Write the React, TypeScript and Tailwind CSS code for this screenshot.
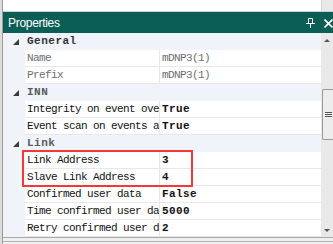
import React from 'react';

type Row =
  | { kind: 'cat'; label: string; dark?: boolean }
  | { kind: 'prop'; name: string; value: string; muted?: boolean };

const rows: Row[] = [
  { kind: 'cat', label: 'General', dark: true },
  { kind: 'prop', name: 'Name', value: 'mDNP3(1)', muted: true },
  { kind: 'prop', name: 'Prefix', value: 'mDNP3(1)', muted: true },
  { kind: 'cat', label: 'INN' },
  { kind: 'prop', name: 'Integrity on event overflow', value: 'True' },
  { kind: 'prop', name: 'Event scan on events available', value: 'True' },
  { kind: 'cat', label: 'Link' },
  { kind: 'prop', name: 'Link Address', value: '3' },
  { kind: 'prop', name: 'Slave Link Address', value: '4' },
  { kind: 'prop', name: 'Confirmed user data', value: 'False' },
  { kind: 'prop', name: 'Time confirmed user data', value: '5000' },
  { kind: 'prop', name: 'Retry confirmed user data', value: '2' },
];

const mono = "font-['Liberation_Mono','DejaVu_Sans_Mono',monospace]";

const Triangle = () => (
  <svg width="6" height="6" viewBox="0 0 6 6" className="block">
    <path d="M6 0 L6 6 L0 6 Z" fill="#3a3a3a" />
  </svg>
);

const PropRow = ({ row }: { row: Row }) => {
  if (row.kind === 'cat') {
    return (
      <div className="flex h-[17px] items-center bg-[#f0f3f9]">
        <div className="flex w-[22px] justify-end pr-[6px]">
          <Triangle />
        </div>
        <span
          className={`${mono} pl-[2px] text-[11px] font-bold tracking-[0.5px] ${
            row.dark ? 'text-[#333]' : 'text-[#555d5d]'
          }`}
        >
          {row.label}
        </span>
      </div>
    );
  }
  return (
    <div className="flex h-[17px]">
      <div className="w-[22px] bg-[#f0f3f9]" />
      <div className="flex w-[135px] items-center overflow-hidden whitespace-nowrap border-b border-r border-[#e8e8e8] pl-[2px]">
        <span
          className={`${mono} text-[11px] tracking-[-0.6px] ${
            row.muted ? 'text-[#6e6e6e]' : 'text-[#111]'
          }`}
        >
          {row.name}
        </span>
      </div>
      <div className="flex flex-1 items-center overflow-hidden whitespace-nowrap border-b border-[#e8e8e8] pl-[2px]">
        {row.muted ? (
          <span className={`${mono} text-[11px] tracking-[-0.6px] text-[#6e6e6e]`}>
            {row.value}
          </span>
        ) : (
          <span className={`${mono} text-[11px] font-bold tracking-[0.4px] text-[#111]`}>
            {row.value}
          </span>
        )}
      </div>
    </div>
  );
};

const ScrollBar = () => (
  <div className="flex w-[12px] flex-col items-center bg-[#e9e9e9]">
    <div className="mt-[6px] h-0 w-0 border-x-[3px] border-b-[3px] border-x-transparent border-b-[#555]" />
    <div className="mt-[47px] flex h-[51px] w-[11px] flex-col items-center justify-center gap-[1px] self-end rounded-l-[2px] border border-r-0 border-[#9a9a9a] bg-[#ededed]">
      <div className="h-[1px] w-[7px] bg-[#555]" />
      <div className="h-[1px] w-[7px] bg-[#555]" />
      <div className="h-[1px] w-[7px] bg-[#555]" />
    </div>
    <div className="flex-1" />
    <div className="mb-[5px] h-0 w-0 border-x-[3px] border-t-[3px] border-x-transparent border-t-[#555]" />
  </div>
);

export default function App() {
  return (
    <div className="flex h-[244px] w-[333px] overflow-hidden bg-white">
      <div className="w-[3px] border-r border-[#9a9a9a] bg-[#dcdcdc]" />
      <div className="flex flex-1 flex-col">
        <div className="flex h-[12px] border-b border-[#d0d0d0] bg-white">
          <div className="flex-1" />
          <div className="w-[12px] border-l border-[#d4d4d4] bg-[#e9e9e9]" />
        </div>
        <div className="flex h-[21px] items-center bg-[#0b5e55] pl-[5px] pr-[0px]">
          <span className="font-['Liberation_Sans','Noto_Sans',sans-serif] text-[12px] tracking-[-0.3px] text-white">
            Properties
          </span>
          <div className="flex-1" />
          <svg width="9" height="10" viewBox="0 0 9 10" className="mr-[9px] mt-[1px]">
            <path d="M2.5 0.5 H6.5 V5.5 H2.5 Z M0 5.5 H9 M4.5 5.5 V10" stroke="white" strokeWidth="1" fill="none" />
          </svg>
          <svg width="9" height="9" viewBox="0 0 9 9" className="mt-[1px]">
            <path d="M0.5 0.5 L8.5 8.5 M8.5 0.5 L0.5 8.5" stroke="white" strokeWidth="1.6" />
          </svg>
        </div>
        <div className="relative flex flex-1">
          <div className="flex flex-1 flex-col">
            {rows.map((r, i) => (
              <PropRow key={i} row={r} />
            ))}
          </div>
          <ScrollBar />
          <div className="absolute left-[19px] top-[117px] h-[37px] w-[171px] border-2 border-[#f03a3a]" />
        </div>
        <div className="h-[7px] border-t border-[#a8a8a8] bg-[#f0f0f0]">
          <div className="mt-[3px] h-[1px] bg-[#b4b4b4]" />
        </div>
      </div>
    </div>
  );
}
